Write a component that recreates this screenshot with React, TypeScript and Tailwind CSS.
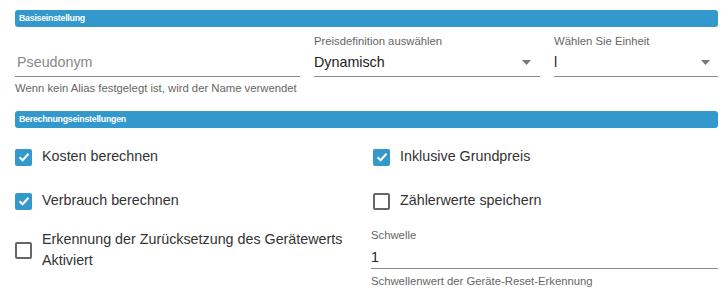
import React from "react";

const BLUE = "#3399cc";

function SectionBar({ title }: { title: string }) {
  return (
    <div className="ml-[15px] mr-[10px] h-[17px] rounded-[3px] bg-[#3399cc] pl-[4px] text-[8.8px] font-bold leading-[17px] tracking-[-0.25px] text-white">
      {title}
    </div>
  );
}

function Caret() {
  return (
    <svg width="9" height="5" viewBox="0 0 9 5" className="shrink-0">
      <path d="M0 0 L9 0 L4.5 5 Z" fill="#777" />
    </svg>
  );
}

function Box({ checked }: { checked: boolean }) {
  if (checked) {
    return (
      <span className="flex h-[17px] w-[17px] shrink-0 items-center justify-center rounded-[2px]" style={{ background: BLUE }}>
        <svg width="12" height="10" viewBox="0 0 12 10">
          <path d="M1.5 5.2 L4.6 8.2 L10.5 1.8" fill="none" stroke="#fff" strokeWidth="2" />
        </svg>
      </span>
    );
  }
  return <span className="h-[17px] w-[17px] shrink-0 rounded-[2px] border-2 border-[#666]" />;
}

function Check({ label, checked }: { label: string; checked: boolean }) {
  return (
    <div className="flex h-[44px] items-center gap-[10px]">
      <Box checked={checked} />
      <span className="text-[14.3px] text-[#333]">{label}</span>
    </div>
  );
}

export default function App() {
  return (
    <div className="h-[293px] w-[728px] overflow-hidden bg-white pt-[10px] font-['Liberation_Sans',Arial,sans-serif]">
      <SectionBar title="Basiseinstellung" />

      <div className="ml-[15px] mr-[10px] mt-[8px] flex">
        <div className="w-[285px]">
          <div className="h-[13px]" />
          <div className="mt-[4px] border-b border-[#8a8a8a] pb-[4px] pl-[2px] text-[14.3px] leading-[20px] text-[#888]">
            Pseudonym
          </div>
          <div className="mt-[5px] text-[11.3px] leading-[13px] text-[#666]">
            Wenn kein Alias festgelegt ist, wird der Name verwendet
          </div>
        </div>

        <div className="ml-[14px] w-[226px]">
          <div className="text-[11.3px] leading-[13px] text-[#666]">Preisdefinition auswählen</div>
          <div className="mt-[4px] flex items-center justify-between border-b border-[#8a8a8a] pb-[4px] pr-[9px] text-[14.3px] leading-[20px] text-[#222]">
            <span>Dynamisch</span>
            <Caret />
          </div>
        </div>

        <div className="ml-[14px] flex-1">
          <div className="text-[11.3px] leading-[13px] text-[#666]">Wählen Sie Einheit</div>
          <div className="mt-[4px] flex items-center justify-between border-b border-[#8a8a8a] pb-[4px] pr-[8px] text-[14.3px] leading-[20px] text-[#222]">
            <span>l</span>
            <Caret />
          </div>
        </div>
      </div>

      <div className="mt-[16px]">
        <SectionBar title="Berechnungseinstellungen" />
      </div>

      <div className="ml-[15px] mr-[10px] mt-[7px] grid grid-cols-[358px_1fr]">
        <Check label="Kosten berechnen" checked />
        <Check label="Inklusive Grundpreis" checked />
        <Check label="Verbrauch berechnen" checked />
        <Check label="Zählerwerte speichern" checked={false} />

        <div className="mt-[6px] flex items-center gap-[10px] self-start">
          <Box checked={false} />
          <span className="w-[305px] text-[14.3px] leading-[21px] text-[#333]">
            Erkennung der Zurücksetzung des Gerätewerts Aktiviert
          </span>
        </div>

        <div className="-ml-[2px] mt-[6px]">
          <div className="text-[11.3px] leading-[13px] text-[#666]">Schwelle</div>
          <div className="mt-[5px] border-b border-[#8a8a8a] pb-[1px] text-[14.3px] leading-[20px] text-[#222]">1</div>
          <div className="mt-[6px] text-[11.3px] leading-[13px] text-[#666]">
            Schwellenwert der Geräte-Reset-Erkennung
          </div>
        </div>
      </div>
    </div>
  );
}
